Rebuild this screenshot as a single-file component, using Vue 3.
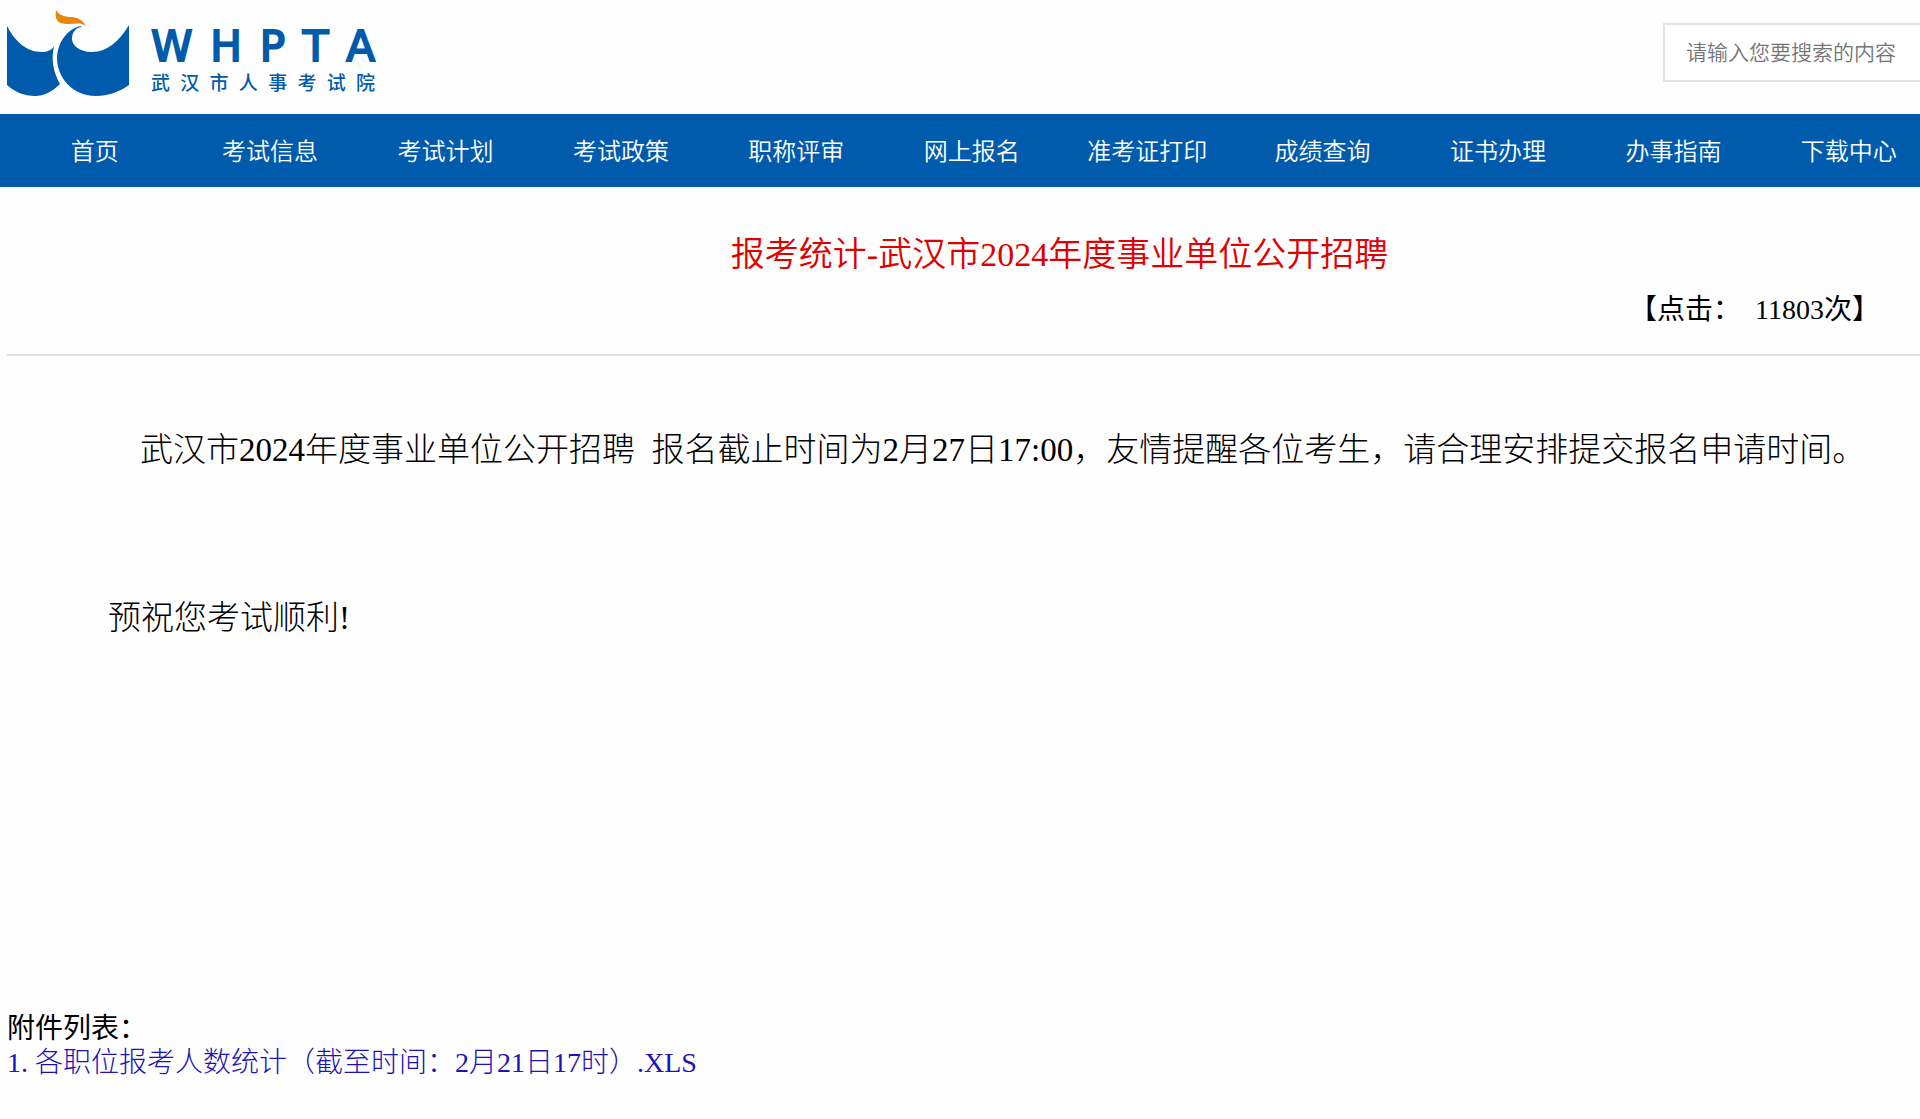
<script setup>
const logoLetters = ['W', 'H', 'P', 'T', 'A']

const menu = [
  '首页',
  '考试信息',
  '考试计划',
  '考试政策',
  '职称评审',
  '网上报名',
  '准考证打印',
  '成绩查询',
  '证书办理',
  '办事指南',
  '下载中心',
]
</script>

<template>
  <div class="viewport" lang="zh-CN">
    <div class="page">
      <header class="header">
        <a class="logo" href="#">
          <svg class="mark" viewBox="0 0 124 88" aria-hidden="true">
            <path
              fill="#005bac"
              d="M0 16 C8 31 19 42 35 42 C40 42 45 40 47 36 C44 49 46 62 53 74 C45 82 37 86 28 86 C17 86 8 82 0 75 Z"
            />
            <path
              fill="#005bac"
              d="M74 16 C63 18 51 29 50 48 C50 66 64 86 89 86 C101 86 112 82 122 75 V15 C112 32 99 42 85 42 C72 42 64 35 65 27 C66 21 69 18 74 17 Z"
            />
            <path
              fill="#ea850d"
              d="M49 0 C52 5 56 6 62 7 C70 7 75 9 79 16 C73 12 68 14 62 14 C54 14 47 13 49 0 Z"
            />
          </svg>
          <span class="logo-text">
            <span class="logo-latin"
              ><span v-for="letter in logoLetters" :key="letter">{{ letter }}</span></span
            >
            <span class="logo-name">武汉市人事考试院</span>
          </span>
        </a>
        <form class="search" @submit.prevent>
          <input type="text" placeholder="请输入您要搜索的内容" aria-label="搜索" />
        </form>
      </header>

      <nav class="nav">
        <a v-for="item in menu" :key="item" href="#">{{ item }}</a>
      </nav>

      <main class="article">
        <h1>报考统计-武汉市2024年度事业单位公开招聘</h1>
        <p class="hits">【点击：&nbsp;&nbsp;11803次】</p>
        <div class="body">
          <p class="notice">
            武汉市2024年度事业单位公开招聘&nbsp;&nbsp;报名截止时间为2月27日17:00，友情提醒各位考生，请合理安排提交报名申请时间。
          </p>
          <p class="wish">预祝您考试顺利!</p>
        </div>
        <section class="files">
          <h2>附件列表：</h2>
          <a href="#"><span class="num">1.</span>各职位报考人数统计（截至时间：2月21日17时）.XLS</a>
        </section>
      </main>
    </div>
  </div>
</template>

<style>
body {
  margin: 0;
  background: #fefefe;
}
</style>

<style scoped>
.viewport {
  overflow: hidden;
  font-family: 'Liberation Serif', 'Noto Sans CJK SC', serif;
  font-weight: 300;
  color: #000;
}
.page {
  width: 110%;
}
h1,
h2,
p {
  margin: 0;
  font-weight: 300;
}
a {
  text-decoration: none;
}

.header {
  display: flex;
  justify-content: space-between;
  align-items: flex-start;
  box-sizing: border-box;
  height: 114px;
  padding-left: 7px;
}
.logo {
  display: flex;
  gap: 20px;
  padding-top: 10px;
  color: #005bac;
}
.mark {
  width: 124px;
  height: 88px;
}
.logo-text {
  display: flex;
  flex-direction: column;
  width: 224px;
  padding-top: 16px;
}
.logo-latin {
  display: flex;
  justify-content: space-between;
  font: 400 42px/42px 'DejaVu Sans', sans-serif;
  -webkit-text-stroke: 2px #005bac;
}
.logo-name {
  font: 500 19px/28px 'Noto Sans CJK SC', sans-serif;
  text-align: justify;
  text-align-last: justify;
}
.search {
  width: 449px;
  padding-top: 23px;
}
.search input {
  box-sizing: border-box;
  width: 100%;
  height: 59px;
  padding: 0 21px 4px;
  border: 2px solid #e2e2e2;
  background: #fff;
  font: 350 21px 'Noto Sans CJK SC', sans-serif;
}
.search input::placeholder {
  color: #757575;
  opacity: 1;
}

.nav {
  display: grid;
  grid-template-columns: repeat(12, 1fr);
  padding-left: 7px;
  background: #005bac;
}
.nav a {
  padding-top: 3px;
  font-size: 24px;
  font-weight: 350;
  line-height: 70px;
  text-align: center;
  color: #fff;
}

.article {
  padding-left: 7px;
}
h1 {
  padding-top: 44px;
  font-size: 34px;
  font-weight: 350;
  line-height: 48px;
  text-align: center;
  color: #e00000;
}
.hits {
  padding: 11px 232px 24px 0;
  border-bottom: 2px solid #e2e2e2;
  font-size: 28px;
  font-weight: 400;
  line-height: 40px;
  text-align: right;
}
.body {
  box-sizing: border-box;
  min-height: 656px;
  padding: 70px 0 0 101px;
  font-size: 33px;
  line-height: 48px;
}
.notice {
  padding-left: 32px;
  white-space: nowrap;
}
.wish {
  padding-top: 120px;
}
.files {
  font-size: 28px;
  line-height: 34px;
}
.files h2 {
  font-size: 28px;
  font-weight: 400;
}
.files a {
  display: flex;
  color: #1c12b8;
}
.num {
  width: 28px;
}
</style>
